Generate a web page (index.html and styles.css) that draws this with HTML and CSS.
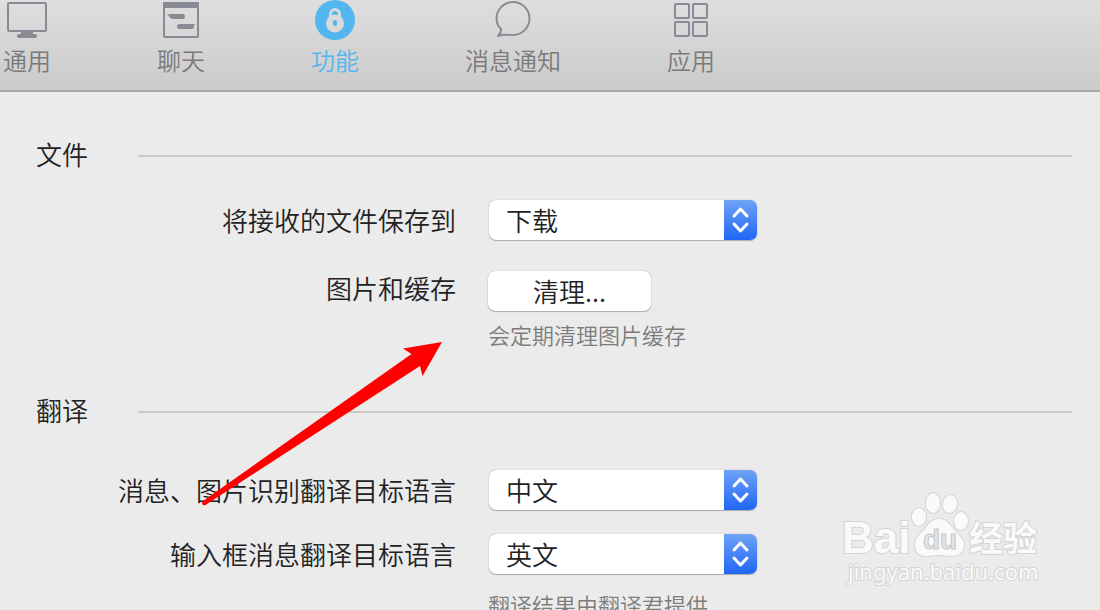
FILE: index.html
```html
<!DOCTYPE html>
<html lang="zh-CN">
<head>
    <meta charset="UTF-8">
    <meta name="viewport" content="width=device-width, initial-scale=1.0">
    <title>功能</title>
    <link rel="stylesheet" href="styles.css">
</head>
<body>
    <nav class="toolbar">
        <button type="button" class="tab">
            <svg width="40" height="40" viewBox="0 0 40 40" fill="none" stroke="currentColor" stroke-width="2">
                <rect x="1" y="3" width="38" height="28" rx="1"/>
                <path d="M14 32h12v2h-12z" fill="currentColor" stroke="none"/>
                <rect x="10" y="34" width="20" height="4" rx="2" fill="currentColor" stroke="none"/>
            </svg>
            <span>通用</span>
        </button>
        <button type="button" class="tab">
            <svg width="40" height="40" viewBox="0 0 40 40" fill="currentColor">
                <rect x="3" y="3" width="34" height="34" rx="1" fill="none" stroke="currentColor" stroke-width="2"/>
                <path d="M2 2h36v6H2z"/>
                <path d="M6 14h15.500a2.500 2.500 0 0 1 0 5H12q-3 0-4-3z"/>
                <path d="M34 24H18.500a2.500 2.500 0 0 0 0 5H31q2 0 2-3z"/>
            </svg>
            <span>聊天</span>
        </button>
        <button type="button" class="tab active">
            <svg width="40" height="40" viewBox="0 0 40 40">
                <circle cx="20" cy="20" r="20" fill="currentColor"/>
                <path d="M15.500 17v-3a4.500 4.500 0 0 1 9 0v3" fill="none" stroke="#dadada" stroke-width="3"/>
                <circle cx="20" cy="23.500" r="9" fill="#dadada"/>
                <rect x="18" y="20" width="4" height="6" rx="2" fill="currentColor"/>
            </svg>
            <span>功能</span>
        </button>
        <button type="button" class="tab">
            <svg width="40" height="40" viewBox="0 0 40 40" fill="none" stroke="currentColor" stroke-width="2" stroke-linejoin="round">
                <path d="M8 29C5 26 3.500 22.500 3.500 18.500a16.500 16.500 0 1 1 16.500 16.500C15 35 10.500 34 5 36Q8.500 32.500 8 29z"/>
            </svg>
            <span>消息通知</span>
        </button>
        <button type="button" class="tab">
            <svg width="40" height="40" viewBox="0 0 40 40" fill="none" stroke="currentColor" stroke-width="2">
                <rect x="4" y="4" width="14" height="14" rx="1"/>
                <rect x="22" y="4" width="14" height="14" rx="1"/>
                <rect x="4" y="22" width="14" height="14" rx="1"/>
                <rect x="22" y="22" width="14" height="14" rx="1"/>
            </svg>
            <span>应用</span>
        </button>
    </nav>

    <main class="settings">
        <section>
            <h2>文件</h2>
            <div class="row">
                <label for="savePath">将接收的文件保存到</label>
                <div class="popup">
                    <select id="savePath">
                        <option>下载</option>
                    </select>
                    <svg class="arrows" viewBox="0 0 33 40"><path d="M10 16l6.500-7 6.500 7M10 24l6.500 7 6.500-7"/></svg>
                </div>
            </div>
            <div class="row">
                <label for="clearCache">图片和缓存</label>
                <div>
                    <button type="button" class="push" id="clearCache">清理...</button>
                    <p class="note">会定期清理图片缓存</p>
                </div>
            </div>
        </section>

        <section>
            <h2>翻译</h2>
            <div class="row">
                <label for="messageLang">消息、图片识别翻译目标语言</label>
                <div class="popup">
                    <select id="messageLang">
                        <option>中文</option>
                    </select>
                    <svg class="arrows" viewBox="0 0 33 40"><path d="M10 16l6.500-7 6.500 7M10 24l6.500 7 6.500-7"/></svg>
                </div>
            </div>
            <div class="row">
                <label for="inputLang">输入框消息翻译目标语言</label>
                <div>
                    <div class="popup">
                        <select id="inputLang">
                            <option>英文</option>
                        </select>
                        <svg class="arrows" viewBox="0 0 33 40"><path d="M10 16l6.500-7 6.500 7M10 24l6.500 7 6.500-7"/></svg>
                    </div>
                    <p class="note">翻译结果由翻译君提供</p>
                </div>
            </div>
        </section>
    </main>

    <!-- Red pointer -->
    <svg class="pointer" width="250" height="170" viewBox="0 0 250 170">
        <path d="M242 2L203 8.500L211.500 14L3 161Q1 163 3 165Q5 166 7 164L220 26L222.500 36z" fill="#f00"/>
    </svg>

    <!-- Watermark -->
    <svg class="watermark" width="220" height="110" viewBox="0 0 220 110">
        <g class="mark">
            <ellipse cx="79" cy="27" rx="7" ry="9"/>
            <ellipse cx="93" cy="13" rx="7" ry="10"/>
            <ellipse cx="110" cy="14" rx="7" ry="9" transform="rotate(10 110 14)"/>
            <ellipse cx="121" cy="31" rx="7" ry="9"/>
            <path d="M99 29c8 0 11 6 15 11 5 5 10 9 10 15 0 8-6 11-12 11-5 0-8-1-13-1s-8 1-13 1c-7 0-11-4-11-11 0-6 4-10 9-15 4-5 7-11 15-11z"/>
            <text class="bai" x="2" y="63">Bai</text>
            <text class="exp" x="129" y="61">经验</text>
            <text class="url" x="8" y="90">jingyan.baidu.com</text>
        </g>
        <text class="du" x="83" y="59">du</text>
    </svg>
</body>
</html>
```
FILE: styles.css
```css
* { box-sizing: border-box; margin: 0; padding: 0; }
body {
    font-family: "Noto Sans CJK SC", sans-serif;
    font-weight: 350;
    background-color: #ebebeb;
    color: #222;
    position: relative;
    height: 100vh;
    overflow: hidden;
}
button, select {
    font: inherit;
    color: inherit;
    border: none;
}

/* Toolbar */
.toolbar {
    display: flex;
    gap: 106px;
    height: 92px;
    padding-left: 3px;
    background: linear-gradient(#dedede, #cbcbcb);
    border-bottom: 2px solid #a8a8a8;
}
.tab {
    display: flex;
    flex-direction: column;
    align-items: center;
    gap: 2px;
    background: none;
    color: #888b93;
    font-size: 24px;
    line-height: 36px;
}
.tab svg { flex: none; }
.tab span { color: #7a7a7a; }
.tab.active, .tab.active span { color: #53b6ef; }

/* Settings */
.settings { padding: 42px 28px 0 36px; }
h2 {
    display: flex;
    align-items: center;
    gap: 50px;
    margin-bottom: 26px;
    font-size: 26px;
    font-weight: inherit;
    line-height: 40px;
}
h2::after {
    content: "";
    flex: 1;
    height: 2px;
    margin-top: 4px;
    background-color: #c9c9c9;
}
section + section { margin-top: 38px; }
section + section h2 { margin-bottom: 40px; }
.row {
    display: grid;
    grid-template-columns: 420px 1fr;
    gap: 32px;
    margin-bottom: 28px;
    font-size: 26px;
}
section + section .row { margin-bottom: 24px; }
.row label {
    text-align: right;
    line-height: 40px;
}
.popup {
    position: relative;
    width: 268px;
    height: 40px;
    margin-left: 1px;
}
.popup select {
    appearance: none;
    width: 100%;
    height: 100%;
    padding: 0 48px 2px 17px;
    border-radius: 7px;
}
.popup select, .push {
    background-color: #fff;
    box-shadow: 0 0 1px rgba(0,0,0,0.4), 0 1px 1px rgba(0,0,0,0.24);
}
.arrows {
    position: absolute;
    top: 0;
    right: 0;
    width: 33px;
    height: 40px;
    border-radius: 0 7px 7px 0;
    background: linear-gradient(#6fa3f6, #1f66f6);
    fill: none;
    stroke: #fff;
    stroke-width: 3;
    stroke-linecap: round;
    stroke-linejoin: round;
    pointer-events: none;
}
.push {
    display: block;
    width: 163px;
    height: 40px;
    margin-top: 3px;
    padding-bottom: 2px;
    border-radius: 7px;
}
.note {
    margin-top: 12px;
    color: #7c7c7c;
    font-size: 22px;
    line-height: 36px;
}
.push + .note { margin-top: 5px; }

/* Overlays */
.pointer {
    position: absolute;
    left: 200px;
    top: 340px;
    pointer-events: none;
}
.watermark {
    position: absolute;
    right: 40px;
    top: 490px;
    pointer-events: none;
}
.mark {
    fill: #fafafa;
    stroke: #d4d4d4;
    stroke-width: 2;
    paint-order: stroke;
}
.bai, .du { font-family: "Liberation Sans", sans-serif; font-weight: bold; }
.bai { font-size: 44px; }
.du { font-size: 28px; fill: #e4e4e4; stroke: #c8c8c8; }
.exp { font-size: 34px; font-weight: bold; }
.url { font-family: "Noto Sans", sans-serif; font-size: 22px; font-weight: 400; }
```
